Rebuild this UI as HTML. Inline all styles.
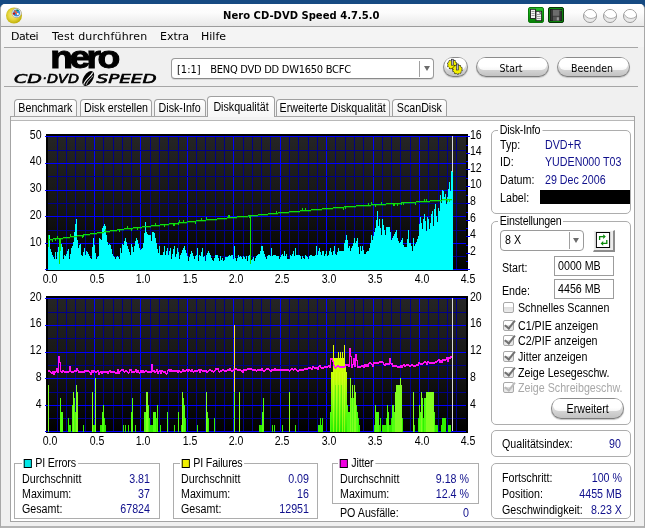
<!DOCTYPE html>
<html><head><meta charset="utf-8"><title>Nero CD-DVD Speed 4.7.5.0</title>
<style>
*{box-sizing:border-box;margin:0;padding:0}
html,body{width:645px;height:528px;overflow:hidden;background:#164a82}
body{position:relative;will-change:transform;font-family:"Liberation Sans",sans-serif;font-size:12px;line-height:14px;color:#000}
.abs,.t,.v,.ax{position:absolute;white-space:pre}
.t,.v,.gl,.fld span{transform:scaleX(0.89);transform-origin:0 0}
.t,.v{margin-top:-1px}
.v.r{transform-origin:100% 0}
.tab span{display:block;flex:none;transform:scaleX(0.89)}
.fld span{display:inline-block}
#win{position:absolute;left:0;top:4px;width:645px;height:524px;background:#f0f0f0;border:1px solid #a8a8a8;border-top:none;border-bottom:2px solid #b4b4b4;border-radius:5px 5px 0 0;overflow:hidden}
#title{position:absolute;left:0;top:0;width:643px;height:23px;background:linear-gradient(#ffffff 0,#fcfcfc 40%,#e9e9e9 100%);border-bottom:1px solid #9c9c9c}
#title .cap{position:absolute;left:222px;top:6px;white-space:pre;font:bold 10px "DejaVu Sans","Liberation Sans",sans-serif;letter-spacing:0.02px;color:#000}
#menu{position:absolute;left:0;top:23px;width:643px;height:20px;background:#f4f4f4}
.m{position:absolute;top:30px;font:11px "DejaVu Sans","Liberation Sans",sans-serif;letter-spacing:0;white-space:pre}
.hl{position:absolute;height:1px;background:#a6a6a6}
.wb{position:absolute;top:9px;width:14px;height:14px;border-radius:50%;border:1px solid #989898;background:linear-gradient(#ffffff 0,#ffffff 45%,#e2e2e2 46%,#ececec 100%);overflow:hidden}
.wb:after{content:"";position:absolute;left:-1px;top:-7px;width:14px;height:14px;border-radius:50%;background:#fff;border:1px solid #b0b0b0}
.btn{position:absolute;z-index:0;border:1px solid #8c8c8c;border-bottom-color:#7c7c7c;border-radius:10px;background:linear-gradient(#f4f4f4 0,#dcdcdc 50%,#c2c2c2 100%);box-shadow:0 1px 1px #c4c4c4;text-align:center;font:10.5px "DejaVu Sans Condensed","DejaVu Sans",sans-serif;letter-spacing:0;text-indent:-3px}
.btn:before{content:"";position:absolute;z-index:-1;left:1px;right:1px;top:0;height:12px;border-radius:9px 9px 8px 8px;background:linear-gradient(#fff,#fff 70%,#f6f6f6)}
.tab{white-space:nowrap;display:flex;justify-content:center;position:absolute;top:99px;height:17px;border:1px solid #a0a0a0;border-bottom:none;border-radius:4px 4px 0 0;background:linear-gradient(#ffffff,#f2f2f2);padding-top:1px;text-align:center}
.gb{position:absolute;border:1px solid #adadad;border-radius:5px}
.gl{position:absolute;background:#fff;padding:0 2px;white-space:pre;letter-spacing:-0.2px}
.v{color:#10108c}
.r{text-align:right}
.ax{font-size:12px;letter-spacing:0;transform:scaleX(0.88);transform-origin:0 0}
.ax.r{transform-origin:100% 0}
.ax.c{transform-origin:50% 0}
.fld{position:absolute;border:1px solid #9c9c9c;background:#fff;padding:2px 0 0 3px;white-space:pre}
.cb{position:absolute;left:503px;width:11px;height:11px;border:1px solid #a8a8a8;border-radius:2px;background:linear-gradient(#fff 0,#fff 45%,#dedede 50%,#ececec 100%)}
.cb.on:after{content:"";position:absolute;left:3.2px;top:-3.4px;width:3.6px;height:9px;border:solid #707070;border-width:0 2px 2px 0;transform:rotate(38deg)}
.cb.dis.on:after{border-color:#bbb}
</style></head><body>
<div id="win">
 <div id="title"><div class="cap">Nero CD-DVD Speed 4.7.5.0</div></div>
 <div id="menu"></div>
</div>
<!-- title icons -->
<svg class="abs" style="left:5px;top:6px" width="20" height="20" viewBox="0 0 20 20"><defs><radialGradient id="cd" cx="0.45" cy="0.45" r="0.6"><stop offset="0" stop-color="#f4e890"/><stop offset="0.5" stop-color="#e8d840"/><stop offset="1" stop-color="#b8a800"/></radialGradient></defs><circle cx="9" cy="9.5" r="8" fill="url(#cd)"/><circle cx="11.6" cy="7" r="4.6" fill="#fff" stroke="#a0a0a0" stroke-width="0.8"/><circle cx="11.6" cy="7" r="3.4" fill="#2a90e0"/><path d="M9.5 4.5 L13.5 9" stroke="#ff6030" stroke-width="1.6"/><circle cx="9" cy="7.6" r="1.2" fill="#c01010"/><circle cx="12.8" cy="8" r="1" fill="#fff"/><rect x="11.5" y="3.6" width="2" height="1.2" fill="#109020"/></svg>
<div class="abs" style="left:528px;top:7px;width:16px;height:16px;background:linear-gradient(#2cc02c,#0c9c0c 60%,#088008);border:1px solid #0a7a0a;border-radius:2px"></div>
<svg class="abs" style="left:524px;top:4px" width="46" height="24" viewBox="524 4 46 24"><rect x="530.5" y="9.3" width="5" height="9.2" fill="#f4f4f4" stroke="#222" stroke-width="0.9"/><path d="M531.5 11.5h3M531.5 13.5h3M531.5 15.5h3" stroke="#888" stroke-width="0.8"/><rect x="536" y="11.3" width="5.6" height="9.4" fill="#f4f4f4" stroke="#222" stroke-width="0.9"/><path d="M537 14.5h3.6M537 16.5h3.6M537 18.5h3.6" stroke="#888" stroke-width="0.8"/><path d="M539.8 11.3v2h1.8" stroke="#222" stroke-width="0.7" fill="#ccc"/></svg>
<div class="abs" style="left:548px;top:7px;width:16px;height:16px;background:#0b4a0b;border:1px solid #063806;box-shadow:inset 0 0 0 1px #0c8c0c;border-radius:2px"></div>
<svg class="abs" style="left:548px;top:7px" width="16" height="16" viewBox="548 7 16 16"><rect x="550.4" y="9.3" width="11.4" height="11.5" fill="#3a3a3a" stroke="#151515" stroke-width="0.6"/><rect x="552.6" y="9.8" width="7" height="6" fill="#6c6c6c"/><rect x="552.9" y="16.6" width="6.8" height="4.2" fill="#555"/><rect x="556.8" y="17.3" width="2.1" height="3" fill="#9a9a9a"/><rect x="560.4" y="9.9" width="1" height="1" fill="#20c020"/><path d="M552.3 9.5v11M560 11v9.5" stroke="#222" stroke-width="0.6"/></svg>
<div class="wb" style="left:583px"></div><div class="wb" style="left:603px"></div><div class="wb" style="left:623px"></div>
<!-- menu -->
<div class="m" style="left:11px;letter-spacing:-0.45px">Datei</div><div class="m" style="left:52px;letter-spacing:0.2px">Test durchführen</div><div class="m" style="left:160px">Extra</div><div class="m" style="left:201px">Hilfe</div>
<div class="hl" style="left:4px;top:47px;width:634px"></div>
<div class="hl" style="left:4px;top:86px;width:634px"></div>
<!-- logo -->
<svg class="abs" style="left:0;top:44px" width="170" height="44" viewBox="0 44 170 44">
<text x="50.3" y="68" font-family="Liberation Sans,sans-serif" font-weight="bold" font-size="31" textLength="66.3" lengthAdjust="spacingAndGlyphs" stroke="#000" stroke-width="1" letter-spacing="-3">nero</text>
<g font-family="DejaVu Sans,Liberation Sans,sans-serif" font-style="italic" font-size="11.4" fill="#000" stroke="#000" stroke-width="0.55">
<text x="14" y="83.4" textLength="28" lengthAdjust="spacingAndGlyphs">CD</text>
<text x="42.5" y="83.4" textLength="4" lengthAdjust="spacingAndGlyphs">·</text>
<text x="47" y="83.4" textLength="32" lengthAdjust="spacingAndGlyphs">DVD</text>
<text x="96.5" y="83.4" textLength="60" lengthAdjust="spacingAndGlyphs">SPEED</text>
</g>
<g transform="translate(88.2 78.5) rotate(32)"><ellipse cx="0" cy="0" rx="4.6" ry="8.4" fill="#000"/><path d="M-0.6 7.5 C-2.5 2 1.5 -3 0.6 -7.5" stroke="#fff" stroke-width="1.1" fill="none"/><path d="M1.6 6.5 C0.5 2 3 -2 2.4 -5" stroke="#fff" stroke-width="0.7" fill="none"/></g>
</svg>
<!-- drive combo -->
<div class="abs" style="left:171px;top:58px;width:263px;height:21px;border:1px solid #9a9a9a;border-bottom-color:#8a8a8a;border-radius:4px;background:#fff;box-shadow:0 1px 0 #d8d8d8"></div>
<div class="abs" id="cbt" style="left:177px;top:62.5px;font:11px 'DejaVu Sans Condensed','DejaVu Sans',sans-serif;letter-spacing:0">[1:1]<span style="display:inline-block;width:9.6px"></span><span style="letter-spacing:-0.26px">BENQ DVD DD DW1650 BCFC</span></div>
<div class="abs" style="left:419px;top:61px;width:1px;height:16px;background:#a0a0a0"></div>
<div class="abs" style="left:423.5px;top:66px;width:0;height:0;border:3.5px solid transparent;border-top:5px solid #6c6c6c"></div>
<!-- round icon btn -->
<div class="btn" style="left:443px;top:57px;width:25px;height:20px;border-radius:10px"></div>
<svg class="abs" style="left:438px;top:52px" width="36" height="30" viewBox="438 52 36 30"><g id="gr"><circle cx="452.2" cy="64.6" r="4.4" fill="#111" stroke="#111" stroke-width="1.6" stroke-dasharray="1.6 1.16"/><circle cx="452.2" cy="64.6" r="3.9" fill="#f4f000" stroke="#f4f000" stroke-width="1.3" stroke-dasharray="1.1 1.35" stroke-dashoffset="-0.2"/><rect x="451.3" y="59.2" width="2" height="6" fill="#b4b4cc" stroke="#222" stroke-width="0.6"/></g><g><circle cx="457.4" cy="69.4" r="4.4" fill="#111" stroke="#111" stroke-width="1.6" stroke-dasharray="1.6 1.16"/><circle cx="457.4" cy="69.4" r="3.9" fill="#f4f000" stroke="#f4f000" stroke-width="1.3" stroke-dasharray="1.1 1.35" stroke-dashoffset="-0.2"/><rect x="456.5" y="64" width="2" height="6" fill="#b4b4cc" stroke="#222" stroke-width="0.6"/></g></svg>
<div class="btn" style="left:476px;top:57px;width:73px;height:20px;padding-top:3.5px">Start</div>
<div class="btn" style="left:557px;top:57px;width:73px;height:20px;padding-top:3.5px">Beenden</div>
<!-- tabs -->
<div class="abs" style="left:10px;top:116px;width:625px;height:406px;background:#fff;border:1px solid #a4a4a4"></div>
<div class="abs" style="left:11px;top:117px;width:623px;height:3px;background:#f3f3f3"></div><div class="abs" style="left:11px;top:120px;width:623px;height:1px;background:#b8b8b8"></div>
<div class="tab" style="left:14px;width:63px"><span>Benchmark</span></div>
<div class="tab" style="left:80px;width:72px"><span>Disk erstellen</span></div>
<div class="tab" style="left:154px;width:52px"><span>Disk-Info</span></div>
<div class="tab" style="left:207px;width:68px;top:96px;height:21px;background:linear-gradient(#fff,#f6f6f6);z-index:2;padding-top:3px"><span>Diskqualität</span></div>
<div class="tab" style="left:276px;width:114px"><span>Erweiterte Diskqualität</span></div>
<div class="tab" style="left:392px;width:55px"><span>ScanDisk</span></div>
<svg width="645" height="528" viewBox="0 0 645 528" style="position:absolute;left:0;top:0" shape-rendering="crispEdges">
<defs><linearGradient id="bg" x1="0" y1="0" x2="0" y2="1"><stop offset="0" stop-color="#252525"/><stop offset="0.55" stop-color="#141414"/><stop offset="1" stop-color="#000"/></linearGradient></defs>
<path fill="#000" d="M46 134h422v137h-422z"/>
<rect x="48" y="136" width="418" height="134" fill="url(#bg)"/>
<path fill="#000088" d="M57 136h1v134h-1zM66 136h1v134h-1zM75 136h1v134h-1zM85 136h1v134h-1z"/>
<path fill="#0000ff" d="M94 136h1v134h-1z"/>
<path fill="#000088" d="M103 136h1v134h-1zM113 136h1v134h-1zM122 136h1v134h-1zM131 136h1v134h-1z"/>
<path fill="#0000ff" d="M140 136h1v134h-1z"/>
<path fill="#000088" d="M150 136h1v134h-1zM159 136h1v134h-1zM168 136h1v134h-1zM178 136h1v134h-1z"/>
<path fill="#0000ff" d="M187 136h1v134h-1z"/>
<path fill="#000088" d="M196 136h1v134h-1zM205 136h1v134h-1zM215 136h1v134h-1zM224 136h1v134h-1z"/>
<path fill="#0000ff" d="M233 136h1v134h-1z"/>
<path fill="#000088" d="M243 136h1v134h-1zM252 136h1v134h-1zM261 136h1v134h-1zM270 136h1v134h-1z"/>
<path fill="#0000ff" d="M280 136h1v134h-1z"/>
<path fill="#000088" d="M289 136h1v134h-1zM298 136h1v134h-1zM308 136h1v134h-1zM317 136h1v134h-1z"/>
<path fill="#0000ff" d="M326 136h1v134h-1z"/>
<path fill="#000088" d="M335 136h1v134h-1zM345 136h1v134h-1zM354 136h1v134h-1zM363 136h1v134h-1z"/>
<path fill="#0000ff" d="M373 136h1v134h-1z"/>
<path fill="#000088" d="M382 136h1v134h-1zM391 136h1v134h-1zM400 136h1v134h-1zM410 136h1v134h-1z"/>
<path fill="#0000ff" d="M419 136h1v134h-1z"/>
<path fill="#000088" d="M428 136h1v134h-1zM438 136h1v134h-1zM447 136h1v134h-1zM456 136h1v134h-1z"/>
<path fill="#0000ff" d="M45 136h425v1h-425z"/>
<path fill="#000088" d="M48 150h418v1h-418z"/>
<path fill="#0000ff" d="M45 163h421v1h-421z"/>
<path fill="#000088" d="M48 176h418v1h-418z"/>
<path fill="#0000ff" d="M45 190h421v1h-421z"/>
<path fill="#000088" d="M48 203h418v1h-418z"/>
<path fill="#0000ff" d="M45 216h421v1h-421z"/>
<path fill="#000088" d="M48 230h418v1h-418z"/>
<path fill="#0000ff" d="M45 243h421v1h-421z"/>
<path fill="#000088" d="M48 256h418v1h-418z"/>
<path fill="#0000ff" d="M45 269h425v1h-425zM466 136h4v1h-4zM466 145h2v1h-2zM466 153h4v1h-4zM466 161h2v1h-2zM466 169h4v1h-4zM466 178h2v1h-2zM466 186h4v1h-4zM466 195h2v1h-2zM466 203h4v1h-4zM466 212h2v1h-2zM466 220h4v1h-4zM466 228h2v1h-2zM466 236h4v1h-4zM466 245h2v1h-2zM466 253h4v1h-4zM466 261h2v1h-2zM466 269h4v1h-4z"/>
<path fill="#00ffff" d="M48 235h1v35h-1zM49 235h1v35h-1zM50 249h1v21h-1zM51 252h1v18h-1zM52 255h1v15h-1zM53 257h1v13h-1zM54 259h1v11h-1zM55 252h1v18h-1zM56 259h1v11h-1zM57 252h1v18h-1zM58 247h1v23h-1zM59 245h1v25h-1zM60 244h1v26h-1zM61 244h1v26h-1zM62 247h1v23h-1zM63 259h1v11h-1zM64 255h1v15h-1zM65 256h1v14h-1zM66 254h1v16h-1zM67 251h1v19h-1zM68 249h1v21h-1zM69 259h1v11h-1zM70 254h1v16h-1zM71 248h1v22h-1zM72 246h1v24h-1zM73 242h1v28h-1zM74 232h1v38h-1zM75 224h1v46h-1zM76 219h1v51h-1zM77 240h1v30h-1zM78 248h1v22h-1zM79 245h1v25h-1zM80 244h1v26h-1zM81 255h1v15h-1zM82 256h1v14h-1zM83 252h1v18h-1zM84 248h1v22h-1zM85 255h1v15h-1zM86 251h1v19h-1zM87 252h1v18h-1zM88 254h1v16h-1zM89 256h1v14h-1zM90 258h1v12h-1zM91 259h1v11h-1zM92 247h1v23h-1zM93 238h1v32h-1zM94 245h1v25h-1zM95 253h1v17h-1zM96 259h1v11h-1zM97 257h1v13h-1zM98 256h1v14h-1zM99 238h1v32h-1zM100 239h1v31h-1zM101 240h1v30h-1zM102 228h1v42h-1zM103 226h1v44h-1zM104 224h1v46h-1zM105 226h1v44h-1zM106 235h1v35h-1zM107 242h1v28h-1zM108 245h1v25h-1zM109 244h1v26h-1zM110 245h1v25h-1zM111 249h1v21h-1zM112 254h1v16h-1zM113 256h1v14h-1zM114 257h1v13h-1zM115 259h1v11h-1zM116 257h1v13h-1zM117 256h1v14h-1zM118 257h1v13h-1zM119 259h1v11h-1zM120 248h1v22h-1zM121 253h1v17h-1zM122 244h1v26h-1zM123 245h1v25h-1zM124 241h1v29h-1zM125 238h1v32h-1zM126 242h1v28h-1zM127 246h1v24h-1zM128 249h1v21h-1zM129 252h1v18h-1zM130 255h1v15h-1zM131 244h1v26h-1zM132 247h1v23h-1zM133 252h1v18h-1zM134 246h1v24h-1zM135 241h1v29h-1zM136 238h1v32h-1zM137 240h1v30h-1zM138 244h1v26h-1zM139 248h1v22h-1zM140 250h1v20h-1zM141 249h1v21h-1zM142 248h1v22h-1zM143 243h1v27h-1zM144 233h1v37h-1zM145 222h1v48h-1zM146 232h1v38h-1zM147 234h1v36h-1zM148 235h1v35h-1zM149 235h1v35h-1zM150 235h1v35h-1zM151 241h1v29h-1zM152 232h1v38h-1zM153 232h1v38h-1zM154 233h1v37h-1zM155 238h1v32h-1zM156 243h1v27h-1zM157 249h1v21h-1zM158 253h1v17h-1zM159 246h1v24h-1zM160 255h1v15h-1zM161 255h1v15h-1zM162 255h1v15h-1zM163 252h1v18h-1zM164 246h1v24h-1zM165 255h1v15h-1zM166 251h1v19h-1zM167 248h1v22h-1zM168 255h1v15h-1zM169 251h1v19h-1zM170 248h1v22h-1zM171 259h1v11h-1zM172 254h1v16h-1zM173 249h1v21h-1zM174 246h1v24h-1zM175 257h1v13h-1zM176 254h1v16h-1zM177 248h1v22h-1zM178 252h1v18h-1zM179 259h1v11h-1zM180 255h1v15h-1zM181 253h1v17h-1zM182 250h1v20h-1zM183 248h1v22h-1zM184 246h1v24h-1zM185 250h1v20h-1zM186 253h1v17h-1zM187 256h1v14h-1zM188 261h1v9h-1zM189 257h1v13h-1zM190 254h1v16h-1zM191 251h1v19h-1zM192 253h1v17h-1zM193 256h1v14h-1zM194 259h1v11h-1zM195 256h1v14h-1zM196 255h1v15h-1zM197 248h1v22h-1zM198 261h1v9h-1zM199 255h1v15h-1zM200 256h1v14h-1zM201 252h1v18h-1zM202 248h1v22h-1zM203 257h1v13h-1zM204 256h1v14h-1zM205 261h1v9h-1zM206 255h1v15h-1zM207 253h1v17h-1zM208 251h1v19h-1zM209 253h1v17h-1zM210 255h1v15h-1zM211 258h1v12h-1zM212 260h1v10h-1zM213 261h1v9h-1zM214 258h1v12h-1zM215 255h1v15h-1zM216 255h1v15h-1zM217 255h1v15h-1zM218 258h1v12h-1zM219 261h1v9h-1zM220 256h1v14h-1zM221 260h1v10h-1zM222 258h1v12h-1zM223 261h1v9h-1zM224 260h1v10h-1zM225 257h1v13h-1zM226 257h1v13h-1zM227 257h1v13h-1zM228 256h1v14h-1zM229 255h1v15h-1zM230 256h1v14h-1zM231 255h1v15h-1zM232 255h1v15h-1zM233 259h1v11h-1zM234 246h1v24h-1zM235 258h1v12h-1zM236 261h1v9h-1zM237 258h1v12h-1zM238 255h1v15h-1zM239 257h1v13h-1zM240 256h1v14h-1zM241 257h1v13h-1zM242 259h1v11h-1zM243 256h1v14h-1zM244 257h1v13h-1zM245 259h1v11h-1zM246 256h1v14h-1zM247 261h1v9h-1zM248 256h1v14h-1zM249 255h1v15h-1zM250 260h1v10h-1zM251 260h1v10h-1zM252 259h1v11h-1zM253 257h1v13h-1zM254 261h1v9h-1zM255 258h1v12h-1zM256 256h1v14h-1zM257 255h1v15h-1zM258 254h1v16h-1zM259 254h1v16h-1zM260 251h1v19h-1zM261 246h1v24h-1zM262 246h1v24h-1zM263 251h1v19h-1zM264 254h1v16h-1zM265 257h1v13h-1zM266 259h1v11h-1zM267 256h1v14h-1zM268 255h1v15h-1zM269 255h1v15h-1zM270 256h1v14h-1zM271 248h1v22h-1zM272 256h1v14h-1zM273 255h1v15h-1zM274 255h1v15h-1zM275 255h1v15h-1zM276 256h1v14h-1zM277 256h1v14h-1zM278 256h1v14h-1zM279 259h1v11h-1zM280 257h1v13h-1zM281 255h1v15h-1zM282 254h1v16h-1zM283 256h1v14h-1zM284 251h1v19h-1zM285 256h1v14h-1zM286 254h1v16h-1zM287 259h1v11h-1zM288 259h1v11h-1zM289 259h1v11h-1zM290 255h1v15h-1zM291 256h1v14h-1zM292 254h1v16h-1zM293 251h1v19h-1zM294 256h1v14h-1zM295 248h1v22h-1zM296 255h1v15h-1zM297 255h1v15h-1zM298 255h1v15h-1zM299 255h1v15h-1zM300 256h1v14h-1zM301 259h1v11h-1zM302 256h1v14h-1zM303 258h1v12h-1zM304 259h1v11h-1zM305 255h1v15h-1zM306 256h1v14h-1zM307 257h1v13h-1zM308 259h1v11h-1zM309 256h1v14h-1zM310 255h1v15h-1zM311 255h1v15h-1zM312 256h1v14h-1zM313 256h1v14h-1zM314 256h1v14h-1zM315 255h1v15h-1zM316 246h1v24h-1zM317 255h1v15h-1zM318 251h1v19h-1zM319 248h1v22h-1zM320 252h1v18h-1zM321 255h1v15h-1zM322 251h1v19h-1zM323 251h1v19h-1zM324 256h1v14h-1zM325 254h1v16h-1zM326 251h1v19h-1zM327 256h1v14h-1zM328 255h1v15h-1zM329 251h1v19h-1zM330 248h1v22h-1zM331 252h1v18h-1zM332 255h1v15h-1zM333 251h1v19h-1zM334 246h1v24h-1zM335 254h1v16h-1zM336 255h1v15h-1zM337 252h1v18h-1zM338 248h1v22h-1zM339 251h1v19h-1zM340 251h1v19h-1zM341 251h1v19h-1zM342 251h1v19h-1zM343 251h1v19h-1zM344 243h1v27h-1zM345 240h1v30h-1zM346 235h1v35h-1zM347 240h1v30h-1zM348 248h1v22h-1zM349 246h1v24h-1zM350 251h1v19h-1zM351 248h1v22h-1zM352 246h1v24h-1zM353 243h1v27h-1zM354 238h1v32h-1zM355 243h1v27h-1zM356 241h1v29h-1zM357 238h1v32h-1zM358 247h1v23h-1zM359 254h1v16h-1zM360 246h1v24h-1zM361 251h1v19h-1zM362 246h1v24h-1zM363 250h1v20h-1zM364 254h1v16h-1zM365 254h1v16h-1zM366 252h1v18h-1zM367 251h1v19h-1zM368 251h1v19h-1zM369 248h1v22h-1zM370 243h1v27h-1zM371 235h1v35h-1zM372 240h1v30h-1zM373 236h1v34h-1zM374 232h1v38h-1zM375 228h1v42h-1zM376 220h1v50h-1zM377 211h1v59h-1zM378 226h1v44h-1zM379 219h1v51h-1zM380 228h1v42h-1zM381 235h1v35h-1zM382 219h1v51h-1zM383 225h1v45h-1zM384 230h1v40h-1zM385 235h1v35h-1zM386 227h1v43h-1zM387 227h1v43h-1zM388 227h1v43h-1zM389 227h1v43h-1zM390 232h1v38h-1zM391 240h1v30h-1zM392 238h1v32h-1zM393 236h1v34h-1zM394 234h1v36h-1zM395 232h1v38h-1zM396 230h1v40h-1zM397 238h1v32h-1zM398 241h1v29h-1zM399 243h1v27h-1zM400 242h1v28h-1zM401 240h1v30h-1zM402 238h1v32h-1zM403 245h1v25h-1zM404 247h1v23h-1zM405 247h1v23h-1zM406 247h1v23h-1zM407 239h1v31h-1zM408 230h1v40h-1zM409 243h1v27h-1zM410 243h1v27h-1zM411 246h1v24h-1zM412 251h1v19h-1zM413 238h1v32h-1zM414 246h1v24h-1zM415 244h1v26h-1zM416 242h1v28h-1zM417 239h1v31h-1zM418 236h1v34h-1zM419 224h1v46h-1zM420 217h1v53h-1zM421 223h1v47h-1zM422 229h1v41h-1zM423 219h1v51h-1zM424 214h1v56h-1zM425 221h1v49h-1zM426 231h1v39h-1zM427 217h1v53h-1zM428 219h1v51h-1zM429 229h1v41h-1zM430 223h1v47h-1zM431 214h1v56h-1zM432 211h1v59h-1zM433 226h1v44h-1zM434 209h1v61h-1zM435 204h1v66h-1zM436 216h1v54h-1zM437 222h1v48h-1zM438 208h1v62h-1zM439 211h1v59h-1zM440 195h1v75h-1zM441 203h1v67h-1zM442 190h1v80h-1zM443 191h1v79h-1zM444 197h1v73h-1zM445 194h1v76h-1zM446 204h1v66h-1zM447 197h1v73h-1zM448 189h1v81h-1zM449 182h1v88h-1zM450 191h1v79h-1zM451 171h1v99h-1zM452 171h1v99h-1z"/>
<path fill="#d8d8d8" d="M452 136h1v36h-1z"/>
<path fill="#0ce00c" d="M48 235h1v12h-1zM49 239h1v1h-1zM50 239h1v1h-1zM51 239h1v1h-1zM52 239h1v3h-1zM53 238h1v1h-1zM54 238h1v1h-1zM55 238h1v3h-1zM56 238h1v1h-1zM57 236h1v3h-1zM58 238h1v1h-1zM59 238h1v3h-1zM60 238h1v3h-1zM61 238h1v1h-1zM62 238h1v1h-1zM63 237h1v1h-1zM64 237h1v1h-1zM65 237h1v1h-1zM66 237h1v1h-1zM67 237h1v1h-1zM68 237h1v1h-1zM69 237h1v1h-1zM70 234h1v3h-1zM71 236h1v1h-1zM72 236h1v1h-1zM73 236h1v1h-1zM74 236h1v1h-1zM75 236h1v1h-1zM76 236h1v1h-1zM77 235h1v1h-1zM78 235h1v1h-1zM79 235h1v1h-1zM80 235h1v1h-1zM81 235h1v1h-1zM82 235h1v3h-1zM83 234h1v3h-1zM84 234h1v1h-1zM85 234h1v1h-1zM86 234h1v1h-1zM87 234h1v1h-1zM88 234h1v1h-1zM89 234h1v1h-1zM90 233h1v1h-1zM91 233h1v1h-1zM92 233h1v1h-1zM93 233h1v1h-1zM94 233h1v1h-1zM95 233h1v1h-1zM96 233h1v1h-1zM97 232h1v1h-1zM98 232h1v1h-1zM99 232h1v1h-1zM100 232h1v1h-1zM101 232h1v1h-1zM102 232h1v1h-1zM103 232h1v1h-1zM104 231h1v1h-1zM105 229h1v3h-1zM106 231h1v1h-1zM107 231h1v1h-1zM108 231h1v1h-1zM109 231h1v1h-1zM110 230h1v1h-1zM111 230h1v1h-1zM112 230h1v1h-1zM113 230h1v1h-1zM114 230h1v1h-1zM115 230h1v1h-1zM116 230h1v1h-1zM117 229h1v1h-1zM118 229h1v1h-1zM119 229h1v3h-1zM120 229h1v1h-1zM121 229h1v1h-1zM122 229h1v1h-1zM123 229h1v1h-1zM124 228h1v1h-1zM125 228h1v1h-1zM126 228h1v1h-1zM127 226h1v3h-1zM128 228h1v1h-1zM129 228h1v1h-1zM130 228h1v1h-1zM131 228h1v3h-1zM132 228h1v1h-1zM133 227h1v1h-1zM134 227h1v1h-1zM135 227h1v1h-1zM136 227h1v1h-1zM137 227h1v3h-1zM138 227h1v1h-1zM139 227h1v1h-1zM140 227h1v1h-1zM141 227h1v1h-1zM142 226h1v1h-1zM143 226h1v1h-1zM144 226h1v1h-1zM145 226h1v1h-1zM146 226h1v1h-1zM147 226h1v1h-1zM148 226h1v1h-1zM149 226h1v1h-1zM150 226h1v1h-1zM151 225h1v1h-1zM152 225h1v1h-1zM153 225h1v1h-1zM154 225h1v1h-1zM155 223h1v3h-1zM156 225h1v1h-1zM157 225h1v1h-1zM158 225h1v1h-1zM159 225h1v1h-1zM160 224h1v1h-1zM161 224h1v1h-1zM162 224h1v1h-1zM163 224h1v1h-1zM164 224h1v3h-1zM165 224h1v1h-1zM166 224h1v1h-1zM167 224h1v1h-1zM168 224h1v1h-1zM169 223h1v1h-1zM170 223h1v1h-1zM171 223h1v1h-1zM172 223h1v1h-1zM173 223h1v3h-1zM174 223h1v3h-1zM175 223h1v1h-1zM176 223h1v1h-1zM177 223h1v1h-1zM178 222h1v3h-1zM179 220h1v3h-1zM180 222h1v1h-1zM181 222h1v1h-1zM182 222h1v1h-1zM183 220h1v3h-1zM184 222h1v1h-1zM185 222h1v1h-1zM186 222h1v1h-1zM187 221h1v1h-1zM188 221h1v1h-1zM189 221h1v1h-1zM190 221h1v1h-1zM191 221h1v1h-1zM192 221h1v1h-1zM193 221h1v1h-1zM194 221h1v1h-1zM195 221h1v3h-1zM196 220h1v1h-1zM197 220h1v1h-1zM198 220h1v1h-1zM199 220h1v1h-1zM200 220h1v1h-1zM201 218h1v3h-1zM202 220h1v1h-1zM203 220h1v1h-1zM204 220h1v1h-1zM205 220h1v1h-1zM206 217h1v3h-1zM207 219h1v1h-1zM208 219h1v1h-1zM209 219h1v1h-1zM210 219h1v1h-1zM211 219h1v1h-1zM212 219h1v1h-1zM213 219h1v1h-1zM214 219h1v1h-1zM215 219h1v1h-1zM216 219h1v1h-1zM217 218h1v1h-1zM218 218h1v1h-1zM219 218h1v1h-1zM220 218h1v1h-1zM221 218h1v1h-1zM222 218h1v1h-1zM223 218h1v1h-1zM224 218h1v1h-1zM225 218h1v1h-1zM226 218h1v1h-1zM227 217h1v1h-1zM228 215h1v3h-1zM229 215h1v3h-1zM230 217h1v1h-1zM231 217h1v1h-1zM232 217h1v1h-1zM233 217h1v1h-1zM234 217h1v1h-1zM235 217h1v1h-1zM236 217h1v1h-1zM237 216h1v1h-1zM238 216h1v1h-1zM239 216h1v1h-1zM240 216h1v1h-1zM241 216h1v1h-1zM242 216h1v1h-1zM243 216h1v1h-1zM244 216h1v1h-1zM245 216h1v1h-1zM246 216h1v1h-1zM247 216h1v1h-1zM248 215h1v1h-1zM249 215h1v3h-1zM250 215h1v1h-1zM251 215h1v1h-1zM252 215h1v1h-1zM253 215h1v1h-1zM254 215h1v1h-1zM255 215h1v1h-1zM256 215h1v1h-1zM257 215h1v1h-1zM258 214h1v1h-1zM259 214h1v1h-1zM260 214h1v1h-1zM261 214h1v1h-1zM262 214h1v1h-1zM263 214h1v1h-1zM264 214h1v1h-1zM265 214h1v1h-1zM266 214h1v1h-1zM267 214h1v1h-1zM268 213h1v1h-1zM269 213h1v1h-1zM270 213h1v1h-1zM271 213h1v1h-1zM272 213h1v1h-1zM273 213h1v1h-1zM274 213h1v1h-1zM275 213h1v1h-1zM276 211h1v3h-1zM277 213h1v1h-1zM278 212h1v1h-1zM279 212h1v1h-1zM280 212h1v1h-1zM281 212h1v1h-1zM282 212h1v1h-1zM283 212h1v1h-1zM284 212h1v1h-1zM285 212h1v1h-1zM286 212h1v1h-1zM287 212h1v1h-1zM288 212h1v1h-1zM289 211h1v1h-1zM290 211h1v1h-1zM291 211h1v1h-1zM292 211h1v1h-1zM293 211h1v1h-1zM294 211h1v1h-1zM295 211h1v1h-1zM296 211h1v1h-1zM297 211h1v1h-1zM298 211h1v1h-1zM299 211h1v1h-1zM300 210h1v1h-1zM301 210h1v1h-1zM302 208h1v3h-1zM303 210h1v1h-1zM304 210h1v1h-1zM305 208h1v3h-1zM306 210h1v1h-1zM307 210h1v1h-1zM308 210h1v1h-1zM309 210h1v1h-1zM310 210h1v1h-1zM311 209h1v1h-1zM312 209h1v1h-1zM313 209h1v1h-1zM314 209h1v1h-1zM315 209h1v1h-1zM316 209h1v1h-1zM317 209h1v1h-1zM318 209h1v1h-1zM319 209h1v1h-1zM320 209h1v1h-1zM321 209h1v1h-1zM322 208h1v1h-1zM323 208h1v1h-1zM324 208h1v1h-1zM325 208h1v1h-1zM326 208h1v1h-1zM327 208h1v1h-1zM328 208h1v1h-1zM329 208h1v1h-1zM330 208h1v1h-1zM331 208h1v1h-1zM332 208h1v1h-1zM333 207h1v1h-1zM334 207h1v1h-1zM335 207h1v1h-1zM336 207h1v1h-1zM337 207h1v1h-1zM338 207h1v1h-1zM339 207h1v1h-1zM340 207h1v1h-1zM341 207h1v1h-1zM342 207h1v1h-1zM343 207h1v3h-1zM344 206h1v1h-1zM345 206h1v3h-1zM346 206h1v1h-1zM347 206h1v1h-1zM348 206h1v1h-1zM349 206h1v1h-1zM350 206h1v1h-1zM351 206h1v1h-1zM352 206h1v1h-1zM353 206h1v1h-1zM354 206h1v1h-1zM355 206h1v1h-1zM356 205h1v1h-1zM357 205h1v1h-1zM358 205h1v1h-1zM359 205h1v1h-1zM360 205h1v1h-1zM361 205h1v1h-1zM362 205h1v1h-1zM363 205h1v1h-1zM364 205h1v1h-1zM365 205h1v1h-1zM366 205h1v1h-1zM367 205h1v1h-1zM368 203h1v3h-1zM369 205h1v1h-1zM370 205h1v1h-1zM371 202h1v3h-1zM372 204h1v1h-1zM373 204h1v1h-1zM374 204h1v1h-1zM375 204h1v3h-1zM376 204h1v1h-1zM377 204h1v1h-1zM378 204h1v1h-1zM379 204h1v1h-1zM380 204h1v1h-1zM381 202h1v3h-1zM382 204h1v1h-1zM383 204h1v1h-1zM384 204h1v1h-1zM385 204h1v1h-1zM386 203h1v1h-1zM387 203h1v1h-1zM388 203h1v1h-1zM389 203h1v1h-1zM390 203h1v1h-1zM391 203h1v1h-1zM392 203h1v1h-1zM393 203h1v3h-1zM394 203h1v3h-1zM395 203h1v1h-1zM396 203h1v1h-1zM397 203h1v3h-1zM398 203h1v1h-1zM399 203h1v1h-1zM400 203h1v1h-1zM401 202h1v3h-1zM402 202h1v1h-1zM403 202h1v3h-1zM404 202h1v1h-1zM405 202h1v1h-1zM406 202h1v1h-1zM407 202h1v1h-1zM408 202h1v1h-1zM409 202h1v1h-1zM410 202h1v1h-1zM411 202h1v1h-1zM412 202h1v1h-1zM413 202h1v1h-1zM414 202h1v1h-1zM415 202h1v3h-1zM416 201h1v1h-1zM417 201h1v1h-1zM418 201h1v1h-1zM419 201h1v1h-1zM420 201h1v1h-1zM421 201h1v1h-1zM422 201h1v1h-1zM423 201h1v1h-1zM424 199h1v3h-1zM425 201h1v1h-1zM426 199h1v3h-1zM427 201h1v1h-1zM428 201h1v1h-1zM429 201h1v1h-1zM430 200h1v1h-1zM431 200h1v1h-1zM432 200h1v1h-1zM433 200h1v1h-1zM434 200h1v1h-1zM435 200h1v1h-1zM436 200h1v1h-1zM437 200h1v1h-1zM438 200h1v1h-1zM439 200h1v1h-1zM440 200h1v1h-1zM441 200h1v1h-1zM442 199h1v1h-1zM443 199h1v1h-1zM444 199h1v1h-1zM445 199h1v1h-1zM446 199h1v1h-1zM447 199h1v3h-1zM448 199h1v1h-1zM449 199h1v3h-1zM450 199h1v1h-1zM451 199h1v1h-1z"/>
<path fill="#0ce00c" opacity="0.3" d="M49 240h1v1h-1zM50 240h1v1h-1zM51 240h1v1h-1zM52 240h1v1h-1zM53 239h1v1h-1zM54 239h1v1h-1zM55 239h1v1h-1zM56 239h1v1h-1zM57 239h1v1h-1zM58 239h1v1h-1zM59 239h1v1h-1zM60 239h1v1h-1zM61 239h1v1h-1zM62 239h1v1h-1zM63 238h1v1h-1zM64 238h1v1h-1zM65 238h1v1h-1zM66 238h1v1h-1zM67 238h1v1h-1zM68 238h1v1h-1zM69 238h1v1h-1zM70 237h1v1h-1zM71 237h1v1h-1zM72 237h1v1h-1zM73 237h1v1h-1zM74 237h1v1h-1zM75 237h1v1h-1zM76 237h1v1h-1zM77 236h1v1h-1zM78 236h1v1h-1zM79 236h1v1h-1zM80 236h1v1h-1zM81 236h1v1h-1zM82 236h1v1h-1zM83 235h1v1h-1zM84 235h1v1h-1zM85 235h1v1h-1zM86 235h1v1h-1zM87 235h1v1h-1zM88 235h1v1h-1zM89 235h1v1h-1zM90 234h1v1h-1zM91 234h1v1h-1zM92 234h1v1h-1zM93 234h1v1h-1zM94 234h1v1h-1zM95 234h1v1h-1zM96 234h1v1h-1zM97 233h1v1h-1zM98 233h1v1h-1zM99 233h1v1h-1zM100 233h1v1h-1zM101 233h1v1h-1zM102 233h1v1h-1zM103 233h1v1h-1zM104 232h1v1h-1zM105 232h1v1h-1zM106 232h1v1h-1zM107 232h1v1h-1zM108 232h1v1h-1zM109 232h1v1h-1zM110 231h1v1h-1zM111 231h1v1h-1zM112 231h1v1h-1zM113 231h1v1h-1zM114 231h1v1h-1zM115 231h1v1h-1zM116 231h1v1h-1zM117 230h1v1h-1zM118 230h1v1h-1zM119 230h1v1h-1zM120 230h1v1h-1zM121 230h1v1h-1zM122 230h1v1h-1zM123 230h1v1h-1zM124 229h1v1h-1zM125 229h1v1h-1zM126 229h1v1h-1zM127 229h1v1h-1zM128 229h1v1h-1zM129 229h1v1h-1zM130 229h1v1h-1zM131 229h1v1h-1zM132 229h1v1h-1zM133 228h1v1h-1zM134 228h1v1h-1zM135 228h1v1h-1zM136 228h1v1h-1zM137 228h1v1h-1zM138 228h1v1h-1zM139 228h1v1h-1zM140 228h1v1h-1zM141 228h1v1h-1zM142 227h1v1h-1zM143 227h1v1h-1zM144 227h1v1h-1zM145 227h1v1h-1zM146 227h1v1h-1zM147 227h1v1h-1zM148 227h1v1h-1zM149 227h1v1h-1zM150 227h1v1h-1zM151 226h1v1h-1zM152 226h1v1h-1zM153 226h1v1h-1zM154 226h1v1h-1zM155 226h1v1h-1zM156 226h1v1h-1zM157 226h1v1h-1zM158 226h1v1h-1zM159 226h1v1h-1zM160 225h1v1h-1zM161 225h1v1h-1zM162 225h1v1h-1zM163 225h1v1h-1zM164 225h1v1h-1zM165 225h1v1h-1zM166 225h1v1h-1zM167 225h1v1h-1zM168 225h1v1h-1zM169 224h1v1h-1zM170 224h1v1h-1zM171 224h1v1h-1zM172 224h1v1h-1zM173 224h1v1h-1zM174 224h1v1h-1zM175 224h1v1h-1zM176 224h1v1h-1zM177 224h1v1h-1zM178 223h1v1h-1zM179 223h1v1h-1zM180 223h1v1h-1zM181 223h1v1h-1zM182 223h1v1h-1zM183 223h1v1h-1zM184 223h1v1h-1zM185 223h1v1h-1zM186 223h1v1h-1zM187 222h1v1h-1zM188 222h1v1h-1zM189 222h1v1h-1zM190 222h1v1h-1zM191 222h1v1h-1zM192 222h1v1h-1zM193 222h1v1h-1zM194 222h1v1h-1zM195 222h1v1h-1zM196 221h1v1h-1zM197 221h1v1h-1zM198 221h1v1h-1zM199 221h1v1h-1zM200 221h1v1h-1zM201 221h1v1h-1zM202 221h1v1h-1zM203 221h1v1h-1zM204 221h1v1h-1zM205 221h1v1h-1zM206 220h1v1h-1zM207 220h1v1h-1zM208 220h1v1h-1zM209 220h1v1h-1zM210 220h1v1h-1zM211 220h1v1h-1zM212 220h1v1h-1zM213 220h1v1h-1zM214 220h1v1h-1zM215 220h1v1h-1zM216 220h1v1h-1zM217 219h1v1h-1zM218 219h1v1h-1zM219 219h1v1h-1zM220 219h1v1h-1zM221 219h1v1h-1zM222 219h1v1h-1zM223 219h1v1h-1zM224 219h1v1h-1zM225 219h1v1h-1zM226 219h1v1h-1zM227 218h1v1h-1zM228 218h1v1h-1zM229 218h1v1h-1zM230 218h1v1h-1zM231 218h1v1h-1zM232 218h1v1h-1zM233 218h1v1h-1zM234 218h1v1h-1zM235 218h1v1h-1zM236 218h1v1h-1zM237 217h1v1h-1zM238 217h1v1h-1zM239 217h1v1h-1zM240 217h1v1h-1zM241 217h1v1h-1zM242 217h1v1h-1zM243 217h1v1h-1zM244 217h1v1h-1zM245 217h1v1h-1zM246 217h1v1h-1zM247 217h1v1h-1zM248 216h1v1h-1zM249 216h1v1h-1zM250 216h1v1h-1zM251 216h1v1h-1zM252 216h1v1h-1zM253 216h1v1h-1zM254 216h1v1h-1zM255 216h1v1h-1zM256 216h1v1h-1zM257 216h1v1h-1zM258 215h1v1h-1zM259 215h1v1h-1zM260 215h1v1h-1zM261 215h1v1h-1zM262 215h1v1h-1zM263 215h1v1h-1zM264 215h1v1h-1zM265 215h1v1h-1zM266 215h1v1h-1zM267 215h1v1h-1zM268 214h1v1h-1zM269 214h1v1h-1zM270 214h1v1h-1zM271 214h1v1h-1zM272 214h1v1h-1zM273 214h1v1h-1zM274 214h1v1h-1zM275 214h1v1h-1zM276 214h1v1h-1zM277 214h1v1h-1zM278 213h1v1h-1zM279 213h1v1h-1zM280 213h1v1h-1zM281 213h1v1h-1zM282 213h1v1h-1zM283 213h1v1h-1zM284 213h1v1h-1zM285 213h1v1h-1zM286 213h1v1h-1zM287 213h1v1h-1zM288 213h1v1h-1zM289 212h1v1h-1zM290 212h1v1h-1zM291 212h1v1h-1zM292 212h1v1h-1zM293 212h1v1h-1zM294 212h1v1h-1zM295 212h1v1h-1zM296 212h1v1h-1zM297 212h1v1h-1zM298 212h1v1h-1zM299 212h1v1h-1zM300 211h1v1h-1zM301 211h1v1h-1zM302 211h1v1h-1zM303 211h1v1h-1zM304 211h1v1h-1zM305 211h1v1h-1zM306 211h1v1h-1zM307 211h1v1h-1zM308 211h1v1h-1zM309 211h1v1h-1zM310 211h1v1h-1zM311 210h1v1h-1zM312 210h1v1h-1zM313 210h1v1h-1zM314 210h1v1h-1zM315 210h1v1h-1zM316 210h1v1h-1zM317 210h1v1h-1zM318 210h1v1h-1zM319 210h1v1h-1zM320 210h1v1h-1zM321 210h1v1h-1zM322 209h1v1h-1zM323 209h1v1h-1zM324 209h1v1h-1zM325 209h1v1h-1zM326 209h1v1h-1zM327 209h1v1h-1zM328 209h1v1h-1zM329 209h1v1h-1zM330 209h1v1h-1zM331 209h1v1h-1zM332 209h1v1h-1zM333 208h1v1h-1zM334 208h1v1h-1zM335 208h1v1h-1zM336 208h1v1h-1zM337 208h1v1h-1zM338 208h1v1h-1zM339 208h1v1h-1zM340 208h1v1h-1zM341 208h1v1h-1zM342 208h1v1h-1zM343 208h1v1h-1zM344 207h1v1h-1zM345 207h1v1h-1zM346 207h1v1h-1zM347 207h1v1h-1zM348 207h1v1h-1zM349 207h1v1h-1zM350 207h1v1h-1zM351 207h1v1h-1zM352 207h1v1h-1zM353 207h1v1h-1zM354 207h1v1h-1zM355 207h1v1h-1zM356 206h1v1h-1zM357 206h1v1h-1zM358 206h1v1h-1zM359 206h1v1h-1zM360 206h1v1h-1zM361 206h1v1h-1zM362 206h1v1h-1zM363 206h1v1h-1zM364 206h1v1h-1zM365 206h1v1h-1zM366 206h1v1h-1zM367 206h1v1h-1zM368 206h1v1h-1zM369 206h1v1h-1zM370 206h1v1h-1zM371 205h1v1h-1zM372 205h1v1h-1zM373 205h1v1h-1zM374 205h1v1h-1zM375 205h1v1h-1zM376 205h1v1h-1zM377 205h1v1h-1zM378 205h1v1h-1zM379 205h1v1h-1zM380 205h1v1h-1zM381 205h1v1h-1zM382 205h1v1h-1zM383 205h1v1h-1zM384 205h1v1h-1zM385 205h1v1h-1zM386 204h1v1h-1zM387 204h1v1h-1zM388 204h1v1h-1zM389 204h1v1h-1zM390 204h1v1h-1zM391 204h1v1h-1zM392 204h1v1h-1zM393 204h1v1h-1zM394 204h1v1h-1zM395 204h1v1h-1zM396 204h1v1h-1zM397 204h1v1h-1zM398 204h1v1h-1zM399 204h1v1h-1zM400 204h1v1h-1zM401 203h1v1h-1zM402 203h1v1h-1zM403 203h1v1h-1zM404 203h1v1h-1zM405 203h1v1h-1zM406 203h1v1h-1zM407 203h1v1h-1zM408 203h1v1h-1zM409 203h1v1h-1zM410 203h1v1h-1zM411 203h1v1h-1zM412 203h1v1h-1zM413 203h1v1h-1zM414 203h1v1h-1zM415 203h1v1h-1zM416 202h1v1h-1zM417 202h1v1h-1zM418 202h1v1h-1zM419 202h1v1h-1zM420 202h1v1h-1zM421 202h1v1h-1zM422 202h1v1h-1zM423 202h1v1h-1zM424 202h1v1h-1zM425 202h1v1h-1zM426 202h1v1h-1zM427 202h1v1h-1zM428 202h1v1h-1zM429 202h1v1h-1zM430 201h1v1h-1zM431 201h1v1h-1zM432 201h1v1h-1zM433 201h1v1h-1zM434 201h1v1h-1zM435 201h1v1h-1zM436 201h1v1h-1zM437 201h1v1h-1zM438 201h1v1h-1zM439 201h1v1h-1zM440 201h1v1h-1zM441 201h1v1h-1zM442 200h1v1h-1zM443 200h1v1h-1zM444 200h1v1h-1zM445 200h1v1h-1zM446 200h1v1h-1zM447 200h1v1h-1zM448 200h1v1h-1zM449 200h1v1h-1zM450 200h1v1h-1zM451 200h1v1h-1z"/>
<path fill="#0ce00c" d="M59 238h1v26h-1zM60 239h1v12h-1zM250 216h1v48h-1z"/>
<path fill="#000" d="M46 296h422v137h-422z"/>
<rect x="48" y="298" width="418" height="134" fill="url(#bg)"/>
<path fill="#000088" d="M57 298h1v134h-1zM66 298h1v134h-1zM75 298h1v134h-1zM85 298h1v134h-1z"/>
<path fill="#0000ff" d="M94 298h1v134h-1z"/>
<path fill="#000088" d="M103 298h1v134h-1zM113 298h1v134h-1zM122 298h1v134h-1zM131 298h1v134h-1z"/>
<path fill="#0000ff" d="M140 298h1v134h-1z"/>
<path fill="#000088" d="M150 298h1v134h-1zM159 298h1v134h-1zM168 298h1v134h-1zM178 298h1v134h-1z"/>
<path fill="#0000ff" d="M187 298h1v134h-1z"/>
<path fill="#000088" d="M196 298h1v134h-1zM205 298h1v134h-1zM215 298h1v134h-1zM224 298h1v134h-1z"/>
<path fill="#0000ff" d="M233 298h1v134h-1z"/>
<path fill="#000088" d="M243 298h1v134h-1zM252 298h1v134h-1zM261 298h1v134h-1zM270 298h1v134h-1z"/>
<path fill="#0000ff" d="M280 298h1v134h-1z"/>
<path fill="#000088" d="M289 298h1v134h-1zM298 298h1v134h-1zM308 298h1v134h-1zM317 298h1v134h-1z"/>
<path fill="#0000ff" d="M326 298h1v134h-1z"/>
<path fill="#000088" d="M335 298h1v134h-1zM345 298h1v134h-1zM354 298h1v134h-1zM363 298h1v134h-1z"/>
<path fill="#0000ff" d="M373 298h1v134h-1z"/>
<path fill="#000088" d="M382 298h1v134h-1zM391 298h1v134h-1zM400 298h1v134h-1zM410 298h1v134h-1z"/>
<path fill="#0000ff" d="M419 298h1v134h-1z"/>
<path fill="#000088" d="M428 298h1v134h-1zM438 298h1v134h-1zM447 298h1v134h-1zM456 298h1v134h-1z"/>
<path fill="#0000ff" d="M45 298h421v1h-421z"/>
<path fill="#000088" d="M48 312h418v1h-418z"/>
<path fill="#0000ff" d="M45 325h421v1h-421z"/>
<path fill="#000088" d="M48 338h418v1h-418z"/>
<path fill="#0000ff" d="M45 352h421v1h-421z"/>
<path fill="#000088" d="M48 365h418v1h-418z"/>
<path fill="#0000ff" d="M45 378h421v1h-421z"/>
<path fill="#000088" d="M48 392h418v1h-418z"/>
<path fill="#0000ff" d="M45 405h421v1h-421z"/>
<path fill="#000088" d="M48 418h418v1h-418z"/>
<path fill="#0000ff" d="M45 431h421v1h-421z"/>
<path fill="#80ff20" d="M48 385h1v47h-1z"/>
<path fill="#50ff10" d="M60 398h1v34h-1zM61 412h2v20h-2z"/>
<path fill="#30f000" d="M68 418h1v14h-1zM69 425h2v7h-2z"/>
<path fill="#50ff10" d="M72 405h1v27h-1z"/>
<path fill="#80ff20" d="M73 392h1v40h-1z"/>
<path fill="#50ff10" d="M74 398h1v34h-1zM75 412h1v20h-1z"/>
<path fill="#80ff20" d="M76 385h1v47h-1zM77 392h1v40h-1z"/>
<path fill="#30f000" d="M83 425h1v7h-1z"/>
<path fill="#80ff20" d="M92 392h1v40h-1z"/>
<path fill="#30f000" d="M93 425h2v7h-2z"/>
<path fill="#80ff20" d="M95 378h1v54h-1z"/>
<path fill="#30f000" d="M100 425h2v7h-2z"/>
<path fill="#50ff10" d="M102 412h1v20h-1zM103 405h1v27h-1z"/>
<path fill="#30f000" d="M104 418h1v14h-1zM105 425h1v7h-1zM123 425h1v7h-1zM125 425h1v7h-1zM128 425h1v7h-1z"/>
<path fill="#50ff10" d="M131 412h1v20h-1zM132 398h1v34h-1z"/>
<path fill="#30f000" d="M135 425h1v7h-1z"/>
<path fill="#50ff10" d="M144 412h2v20h-2z"/>
<path fill="#80ff20" d="M146 392h2v40h-2z"/>
<path fill="#50ff10" d="M148 405h1v27h-1z"/>
<path fill="#30f000" d="M149 418h1v14h-1zM150 425h3v7h-3z"/>
<path fill="#50ff10" d="M153 412h3v20h-3z"/>
<path fill="#30f000" d="M156 418h1v14h-1z"/>
<path fill="#50ff10" d="M157 405h1v27h-1z"/>
<path fill="#30f000" d="M160 425h1v7h-1z"/>
<path fill="#50ff10" d="M167 412h1v20h-1z"/>
<path fill="#30f000" d="M174 425h1v7h-1z"/>
<path fill="#50ff10" d="M178 412h1v20h-1z"/>
<path fill="#30f000" d="M181 425h1v7h-1z"/>
<path fill="#80ff20" d="M182 392h1v40h-1z"/>
<path fill="#50ff10" d="M183 398h1v34h-1zM184 405h1v27h-1z"/>
<path fill="#30f000" d="M185 418h1v14h-1zM197 425h1v7h-1z"/>
<path fill="#80ff20" d="M206 392h1v40h-1z"/>
<path fill="#50ff10" d="M207 412h1v20h-1z"/>
<path fill="#30f000" d="M208 418h1v14h-1zM214 418h1v14h-1z"/>
<path fill="#ffe030" d="M234 325h1v107h-1z"/>
<path fill="#80ff20" d="M239 392h1v40h-1z"/>
<path fill="#30f000" d="M259 425h3v7h-3z"/>
<path fill="#50ff10" d="M262 412h1v20h-1zM263 398h1v34h-1z"/>
<path fill="#30f000" d="M272 425h1v7h-1zM274 425h1v7h-1zM282 425h1v7h-1z"/>
<path fill="#80ff20" d="M289 392h1v40h-1z"/>
<path fill="#30f000" d="M295 425h1v7h-1zM318 425h1v7h-1zM319 425h1v7h-1zM320 418h1v14h-1zM321 425h1v7h-1zM322 418h1v14h-1z"/>
<path fill="#50ff10" d="M330 412h1v20h-1z"/>
<path fill="#c8ff10" d="M331 372h2v60h-2zM333 345h1v87h-1zM334 358h4v74h-4zM338 352h1v80h-1zM339 358h1v74h-1zM340 352h1v80h-1zM341 358h1v74h-1zM342 352h1v80h-1zM343 358h1v74h-1zM344 345h1v87h-1zM345 365h1v67h-1zM346 372h1v60h-1z"/>
<path fill="#50ff10" d="M347 405h1v27h-1zM348 412h2v20h-2z"/>
<path fill="#80ff20" d="M350 378h1v54h-1z"/>
<path fill="#50ff10" d="M351 398h1v34h-1z"/>
<path fill="#80ff20" d="M352 385h1v47h-1z"/>
<path fill="#50ff10" d="M353 398h1v34h-1z"/>
<path fill="#80ff20" d="M354 385h1v47h-1zM355 392h1v40h-1z"/>
<path fill="#50ff10" d="M356 405h1v27h-1zM357 412h1v20h-1z"/>
<path fill="#30f000" d="M358 418h1v14h-1zM359 425h1v7h-1zM374 425h1v7h-1z"/>
<path fill="#50ff10" d="M375 405h1v27h-1zM376 412h3v20h-3z"/>
<path fill="#30f000" d="M379 425h1v7h-1zM380 418h1v14h-1zM382 425h4v7h-4zM386 418h1v14h-1z"/>
<path fill="#50ff10" d="M387 405h1v27h-1zM388 412h1v20h-1z"/>
<path fill="#30f000" d="M389 425h2v7h-2zM391 418h1v14h-1z"/>
<path fill="#50ff10" d="M392 405h2v27h-2zM394 412h1v20h-1z"/>
<path fill="#80ff20" d="M395 392h1v40h-1zM396 385h4v47h-4zM400 378h1v54h-1zM401 385h1v47h-1z"/>
<path fill="#30f000" d="M402 418h1v14h-1z"/>
<path fill="#80ff20" d="M413 392h1v40h-1z"/>
<path fill="#30f000" d="M414 425h1v7h-1zM418 418h1v14h-1z"/>
<path fill="#50ff10" d="M419 405h1v27h-1zM420 412h1v20h-1z"/>
<path fill="#80ff20" d="M421 392h1v40h-1z"/>
<path fill="#50ff10" d="M422 398h1v34h-1z"/>
<path fill="#30f000" d="M423 418h1v14h-1z"/>
<path fill="#50ff10" d="M424 398h2v34h-2z"/>
<path fill="#80ff20" d="M426 392h8v40h-8z"/>
<path fill="#50ff10" d="M434 412h1v20h-1z"/>
<path fill="#30f000" d="M435 425h3v7h-3zM441 425h1v7h-1zM442 418h4v14h-4zM448 425h3v7h-3z"/>
<defs><linearGradient id="cl" gradientUnits="userSpaceOnUse" x1="0" y1="345.2" x2="0" y2="432"><stop offset="0" stop-color="#e4ff00"/><stop offset="0.38" stop-color="#c4ff08"/><stop offset="0.62" stop-color="#84ff10"/><stop offset="1" stop-color="#28f000"/></linearGradient></defs>
<rect x="331" y="372" width="2" height="60" fill="url(#cl)"/>
<rect x="333" y="345" width="1" height="87" fill="url(#cl)"/>
<rect x="334" y="358" width="4" height="74" fill="url(#cl)"/>
<rect x="338" y="352" width="1" height="80" fill="url(#cl)"/>
<rect x="339" y="358" width="1" height="74" fill="url(#cl)"/>
<rect x="340" y="352" width="1" height="80" fill="url(#cl)"/>
<rect x="341" y="358" width="1" height="74" fill="url(#cl)"/>
<rect x="342" y="352" width="1" height="80" fill="url(#cl)"/>
<rect x="343" y="358" width="1" height="74" fill="url(#cl)"/>
<rect x="344" y="345" width="1" height="87" fill="url(#cl)"/>
<rect x="345" y="365" width="1" height="67" fill="url(#cl)"/>
<rect x="346" y="372" width="1" height="60" fill="url(#cl)"/>
<rect x="333" y="371.7" width="1" height="59.8" fill="#d8ff20" opacity="0.55"/>
<rect x="336" y="371.7" width="1" height="59.8" fill="#d8ff20" opacity="0.55"/>
<rect x="339" y="371.7" width="1" height="59.8" fill="#d8ff20" opacity="0.55"/>
<rect x="342" y="371.7" width="1" height="59.8" fill="#d8ff20" opacity="0.55"/>
<rect x="344" y="371.7" width="1" height="59.8" fill="#d8ff20" opacity="0.55"/>
<rect x="335" y="385.0" width="1" height="46.5" fill="#20e000" opacity="0.45"/>
<rect x="338" y="385.0" width="1" height="46.5" fill="#20e000" opacity="0.45"/>
<rect x="341" y="385.0" width="1" height="46.5" fill="#20e000" opacity="0.45"/>
<path fill="#60ff10" d="M234 391.7h1v39.8h-1z"/>
<path fill="#d8d8d8" d="M452 298h1v133h-1z"/>
<path fill="#ff10f4" d="M48 370h1v2h-1zM49 370h1v2h-1zM50 371h1v2h-1zM51 372h1v2h-1zM52 371h1v3h-1zM53 371h1v4h-1zM54 371h1v4h-1zM55 371h1v2h-1zM56 368h1v4h-1zM57 368h1v5h-1zM58 356h1v17h-1zM59 356h1v7h-1zM60 362h1v10h-1zM61 371h1v2h-1zM62 370h1v3h-1zM63 370h1v2h-1zM64 371h1v2h-1zM65 371h1v2h-1zM66 371h1v2h-1zM67 371h1v2h-1zM68 371h1v2h-1zM69 366h1v6h-1zM70 366h1v6h-1zM71 371h1v2h-1zM72 371h1v2h-1zM73 371h1v2h-1zM74 370h1v2h-1zM75 370h1v2h-1zM76 368h1v4h-1zM77 368h1v3h-1zM78 370h1v3h-1zM79 371h1v2h-1zM80 371h1v2h-1zM81 371h1v2h-1zM82 371h1v2h-1zM83 371h1v2h-1zM84 370h1v3h-1zM85 370h1v2h-1zM86 370h1v2h-1zM87 370h1v2h-1zM88 370h1v2h-1zM89 371h1v2h-1zM90 372h1v3h-1zM91 370h1v5h-1zM92 370h1v3h-1zM93 370h1v3h-1zM94 370h1v2h-1zM95 371h1v2h-1zM96 371h1v2h-1zM97 370h1v2h-1zM98 370h1v5h-1zM99 372h1v3h-1zM100 371h1v2h-1zM101 371h1v3h-1zM102 371h1v3h-1zM103 371h1v2h-1zM104 371h1v2h-1zM105 371h1v2h-1zM106 371h1v2h-1zM107 371h1v3h-1zM108 371h1v3h-1zM109 370h1v2h-1zM110 370h1v3h-1zM111 371h1v2h-1zM112 371h1v2h-1zM113 371h1v2h-1zM114 371h1v2h-1zM115 372h1v2h-1zM116 372h1v2h-1zM117 369h1v5h-1zM118 369h1v5h-1zM119 371h1v3h-1zM120 370h1v2h-1zM121 369h1v2h-1zM122 369h1v2h-1zM123 369h1v3h-1zM124 371h1v2h-1zM125 370h1v2h-1zM126 370h1v2h-1zM127 371h1v2h-1zM128 372h1v2h-1zM129 369h1v4h-1zM130 369h1v2h-1zM131 369h1v4h-1zM132 371h1v2h-1zM133 371h1v2h-1zM134 371h1v2h-1zM135 369h1v3h-1zM136 369h1v4h-1zM137 370h1v3h-1zM138 370h1v3h-1zM139 372h1v2h-1zM140 370h1v3h-1zM141 370h1v3h-1zM142 370h1v3h-1zM143 370h1v3h-1zM144 371h1v2h-1zM145 370h1v2h-1zM146 370h1v2h-1zM147 371h1v2h-1zM148 371h1v2h-1zM149 371h1v2h-1zM150 371h1v2h-1zM151 364h1v9h-1zM152 364h1v8h-1zM153 370h1v2h-1zM154 370h1v3h-1zM155 371h1v2h-1zM156 369h1v3h-1zM157 369h1v5h-1zM158 371h1v3h-1zM159 370h1v2h-1zM160 370h1v4h-1zM161 370h1v4h-1zM162 370h1v2h-1zM163 371h1v2h-1zM164 371h1v2h-1zM165 371h1v3h-1zM166 373h1v2h-1zM167 370h1v4h-1zM168 369h1v2h-1zM169 369h1v3h-1zM170 369h1v3h-1zM171 369h1v3h-1zM172 370h1v2h-1zM173 370h1v2h-1zM174 370h1v2h-1zM175 370h1v2h-1zM176 370h1v2h-1zM177 370h1v3h-1zM178 370h1v3h-1zM179 370h1v2h-1zM180 371h1v2h-1zM181 371h1v2h-1zM182 369h1v3h-1zM183 369h1v3h-1zM184 370h1v2h-1zM185 370h1v2h-1zM186 369h1v2h-1zM187 369h1v3h-1zM188 369h1v3h-1zM189 369h1v2h-1zM190 370h1v2h-1zM191 369h1v3h-1zM192 369h1v3h-1zM193 371h1v2h-1zM194 370h1v2h-1zM195 370h1v2h-1zM196 370h1v2h-1zM197 370h1v2h-1zM198 369h1v2h-1zM199 369h1v4h-1zM200 369h1v4h-1zM201 369h1v2h-1zM202 370h1v2h-1zM203 370h1v2h-1zM204 370h1v2h-1zM205 370h1v2h-1zM206 370h1v3h-1zM207 371h1v2h-1zM208 370h1v2h-1zM209 369h1v2h-1zM210 369h1v2h-1zM211 370h1v2h-1zM212 370h1v2h-1zM213 371h1v2h-1zM214 370h1v2h-1zM215 368h1v3h-1zM216 368h1v2h-1zM217 368h1v2h-1zM218 368h1v4h-1zM219 371h1v2h-1zM220 370h1v2h-1zM221 370h1v2h-1zM222 369h1v2h-1zM223 369h1v2h-1zM224 370h1v2h-1zM225 370h1v2h-1zM226 370h1v2h-1zM227 369h1v2h-1zM228 369h1v2h-1zM229 368h1v3h-1zM230 368h1v3h-1zM231 370h1v2h-1zM232 370h1v2h-1zM233 369h1v2h-1zM234 369h1v2h-1zM235 368h1v2h-1zM236 368h1v2h-1zM237 369h1v2h-1zM238 369h1v2h-1zM239 369h1v2h-1zM240 369h1v2h-1zM241 370h1v2h-1zM242 370h1v3h-1zM243 369h1v4h-1zM244 369h1v2h-1zM245 369h1v2h-1zM246 369h1v2h-1zM247 368h1v2h-1zM248 368h1v2h-1zM249 368h1v2h-1zM250 368h1v2h-1zM251 368h1v2h-1zM252 369h1v2h-1zM253 369h1v2h-1zM254 369h1v2h-1zM255 369h1v2h-1zM256 370h1v2h-1zM257 369h1v2h-1zM258 369h1v2h-1zM259 369h1v2h-1zM260 369h1v2h-1zM261 368h1v3h-1zM262 368h1v3h-1zM263 370h1v2h-1zM264 370h1v2h-1zM265 369h1v2h-1zM266 368h1v2h-1zM267 368h1v2h-1zM268 368h1v2h-1zM269 369h1v2h-1zM270 370h1v2h-1zM271 369h1v3h-1zM272 369h1v2h-1zM273 369h1v2h-1zM274 368h1v3h-1zM275 368h1v3h-1zM276 369h1v2h-1zM277 369h1v2h-1zM278 369h1v2h-1zM279 369h1v2h-1zM280 369h1v2h-1zM281 369h1v2h-1zM282 369h1v2h-1zM283 369h1v2h-1zM284 369h1v2h-1zM285 369h1v2h-1zM286 369h1v2h-1zM287 369h1v2h-1zM288 369h1v2h-1zM289 370h1v2h-1zM290 369h1v2h-1zM291 368h1v2h-1zM292 368h1v2h-1zM293 369h1v2h-1zM294 368h1v2h-1zM295 368h1v2h-1zM296 369h1v2h-1zM297 370h1v2h-1zM298 370h1v2h-1zM299 369h1v2h-1zM300 369h1v2h-1zM301 369h1v2h-1zM302 369h1v2h-1zM303 369h1v2h-1zM304 368h1v2h-1zM305 368h1v2h-1zM306 368h1v2h-1zM307 368h1v2h-1zM308 367h1v2h-1zM309 367h1v2h-1zM310 367h1v2h-1zM311 368h1v2h-1zM312 366h1v4h-1zM313 366h1v2h-1zM314 367h1v2h-1zM315 367h1v2h-1zM316 367h1v2h-1zM317 367h1v3h-1zM318 366h1v4h-1zM319 365h1v2h-1zM320 365h1v3h-1zM321 367h1v2h-1zM322 367h1v2h-1zM323 367h1v2h-1zM324 366h1v2h-1zM325 366h1v2h-1zM326 366h1v2h-1zM327 366h1v2h-1zM328 365h1v2h-1zM329 365h1v3h-1zM330 358h1v10h-1zM331 358h1v2h-1zM332 358h1v4h-1zM333 361h1v5h-1zM334 365h1v3h-1zM335 367h1v2h-1zM336 366h1v2h-1zM337 365h1v2h-1zM338 365h1v2h-1zM339 366h1v2h-1zM340 366h1v2h-1zM341 366h1v2h-1zM342 366h1v2h-1zM343 366h1v2h-1zM344 366h1v2h-1zM345 364h1v3h-1zM346 364h1v2h-1zM347 364h1v2h-1zM348 364h1v3h-1zM349 348h1v19h-1zM350 348h1v9h-1zM351 356h1v12h-1zM352 364h1v4h-1zM353 358h1v7h-1zM354 358h1v9h-1zM355 354h1v13h-1zM356 354h1v7h-1zM357 360h1v8h-1zM358 366h1v2h-1zM359 366h1v2h-1zM360 366h1v2h-1zM361 365h1v2h-1zM362 365h1v2h-1zM363 365h1v3h-1zM364 364h1v4h-1zM365 364h1v3h-1zM366 364h1v3h-1zM367 364h1v3h-1zM368 363h1v4h-1zM369 362h1v2h-1zM370 362h1v2h-1zM371 363h1v2h-1zM372 364h1v3h-1zM373 362h1v5h-1zM374 362h1v2h-1zM375 362h1v2h-1zM376 362h1v2h-1zM377 362h1v2h-1zM378 362h1v2h-1zM379 361h1v2h-1zM380 361h1v2h-1zM381 361h1v2h-1zM382 361h1v2h-1zM383 362h1v3h-1zM384 364h1v2h-1zM385 363h1v3h-1zM386 363h1v2h-1zM387 363h1v2h-1zM388 363h1v2h-1zM389 358h1v7h-1zM390 358h1v6h-1zM391 363h1v2h-1zM392 363h1v4h-1zM393 365h1v2h-1zM394 365h1v2h-1zM395 365h1v2h-1zM396 365h1v2h-1zM397 366h1v2h-1zM398 366h1v2h-1zM399 366h1v2h-1zM400 365h1v3h-1zM401 365h1v3h-1zM402 365h1v3h-1zM403 364h1v2h-1zM404 364h1v3h-1zM405 365h1v2h-1zM406 364h1v2h-1zM407 364h1v2h-1zM408 364h1v2h-1zM409 365h1v2h-1zM410 365h1v2h-1zM411 364h1v2h-1zM412 364h1v2h-1zM413 365h1v2h-1zM414 365h1v2h-1zM415 365h1v2h-1zM416 364h1v2h-1zM417 364h1v2h-1zM418 362h1v4h-1zM419 362h1v2h-1zM420 363h1v2h-1zM421 363h1v2h-1zM422 363h1v2h-1zM423 362h1v2h-1zM424 361h1v2h-1zM425 361h1v2h-1zM426 362h1v3h-1zM427 361h1v4h-1zM428 361h1v2h-1zM429 362h1v2h-1zM430 362h1v2h-1zM431 362h1v2h-1zM432 362h1v2h-1zM433 362h1v2h-1zM434 362h1v2h-1zM435 361h1v2h-1zM436 361h1v2h-1zM437 360h1v2h-1zM438 359h1v2h-1zM439 359h1v4h-1zM440 360h1v3h-1zM441 360h1v3h-1zM442 359h1v4h-1zM443 359h1v2h-1zM444 359h1v2h-1zM445 359h1v2h-1zM446 357h1v3h-1zM447 357h1v5h-1zM448 357h1v5h-1zM449 357h1v2h-1zM450 356h1v3h-1zM451 356h1v2h-1z"/>
</svg>
<div class="ax r" style="left:14px;width:27.6px;top:127.5px">50</div>
<div class="ax r" style="left:14px;width:27.6px;top:154.3px">40</div>
<div class="ax r" style="left:14px;width:27.6px;top:181.1px">30</div>
<div class="ax r" style="left:14px;width:27.6px;top:207.9px">20</div>
<div class="ax r" style="left:14px;width:27.6px;top:234.7px">10</div>
<div class="ax" style="left:469.8px;top:127.5px">16</div>
<div class="ax" style="left:469.8px;top:144.2px">14</div>
<div class="ax" style="left:469.8px;top:160.8px">12</div>
<div class="ax" style="left:469.8px;top:177.4px">10</div>
<div class="ax" style="left:469.8px;top:194.1px">8</div>
<div class="ax" style="left:469.8px;top:210.8px">6</div>
<div class="ax" style="left:469.8px;top:227.4px">4</div>
<div class="ax" style="left:469.8px;top:244.0px">2</div>
<div class="ax r" style="left:14px;width:27.6px;top:289.5px">20</div>
<div class="ax" style="left:469.8px;top:289.5px">20</div>
<div class="ax r" style="left:14px;width:27.6px;top:316.3px">16</div>
<div class="ax" style="left:469.8px;top:316.3px">16</div>
<div class="ax r" style="left:14px;width:27.6px;top:343.1px">12</div>
<div class="ax" style="left:469.8px;top:343.1px">12</div>
<div class="ax r" style="left:14px;width:27.6px;top:369.9px">8</div>
<div class="ax" style="left:469.8px;top:369.9px">8</div>
<div class="ax r" style="left:14px;width:27.6px;top:396.7px">4</div>
<div class="ax" style="left:469.8px;top:396.7px">4</div>
<div class="ax c" style="left:38.2px;width:24px;text-align:center;top:272px">0.0</div>
<div class="ax c" style="left:38.2px;width:24px;text-align:center;top:434px">0.0</div>
<div class="ax c" style="left:84.6px;width:24px;text-align:center;top:272px">0.5</div>
<div class="ax c" style="left:84.6px;width:24px;text-align:center;top:434px">0.5</div>
<div class="ax c" style="left:131.0px;width:24px;text-align:center;top:272px">1.0</div>
<div class="ax c" style="left:131.0px;width:24px;text-align:center;top:434px">1.0</div>
<div class="ax c" style="left:177.5px;width:24px;text-align:center;top:272px">1.5</div>
<div class="ax c" style="left:177.5px;width:24px;text-align:center;top:434px">1.5</div>
<div class="ax c" style="left:223.9px;width:24px;text-align:center;top:272px">2.0</div>
<div class="ax c" style="left:223.9px;width:24px;text-align:center;top:434px">2.0</div>
<div class="ax c" style="left:270.3px;width:24px;text-align:center;top:272px">2.5</div>
<div class="ax c" style="left:270.3px;width:24px;text-align:center;top:434px">2.5</div>
<div class="ax c" style="left:316.8px;width:24px;text-align:center;top:272px">3.0</div>
<div class="ax c" style="left:316.8px;width:24px;text-align:center;top:434px">3.0</div>
<div class="ax c" style="left:363.2px;width:24px;text-align:center;top:272px">3.5</div>
<div class="ax c" style="left:363.2px;width:24px;text-align:center;top:434px">3.5</div>
<div class="ax c" style="left:409.6px;width:24px;text-align:center;top:272px">4.0</div>
<div class="ax c" style="left:409.6px;width:24px;text-align:center;top:434px">4.0</div>
<div class="ax c" style="left:456.0px;width:24px;text-align:center;top:272px">4.5</div>
<div class="ax c" style="left:456.0px;width:24px;text-align:center;top:434px">4.5</div>
<!-- legend boxes -->
<div class="gb" style="left:14px;top:463px;width:146px;height:56px;border-radius:0"></div>
<div class="gl" style="left:22px;top:456px"><span style="display:inline-block;width:9px;height:9px;background:#00e8e8;border:1px solid #000;vertical-align:-1px;margin-right:4px"></span>PI Errors</div>
<div class="t" style="left:22px;top:473px">Durchschnitt</div><div class="t" style="left:22px;top:488px">Maximum:</div><div class="t" style="left:22px;top:503px">Gesamt:</div>
<div class="v r" style="left:90px;width:60px;top:473px">3.81</div><div class="v r" style="left:90px;width:60px;top:488px">37</div><div class="v r" style="left:90px;width:60px;top:503px">67824</div>
<div class="gb" style="left:173px;top:463px;width:145px;height:56px;border-radius:0"></div>
<div class="gl" style="left:180px;top:456px"><span style="display:inline-block;width:9px;height:9px;background:#f0f000;border:1px solid #000;vertical-align:-1px;margin-right:4px"></span>PI Failures</div>
<div class="t" style="left:181px;top:473px">Durchschnitt</div><div class="t" style="left:181px;top:488px">Maximum:</div><div class="t" style="left:181px;top:503px">Gesamt:</div>
<div class="v r" style="left:249px;width:60px;top:473px">0.09</div><div class="v r" style="left:249px;width:60px;top:488px">16</div><div class="v r" style="left:249px;width:60px;top:503px">12951</div>
<div class="gb" style="left:332px;top:463px;width:147px;height:41px;border-radius:0"></div>
<div class="gl" style="left:338px;top:456px"><span style="display:inline-block;width:9px;height:9px;background:#f000e0;border:1px solid #000;vertical-align:-1px;margin-right:4px"></span>Jitter</div>
<div class="t" style="left:340px;top:473px">Durchschnitt</div><div class="t" style="left:340px;top:488px">Maximum:</div><div class="t" style="left:340px;top:507px">PO Ausfälle:</div>
<div class="v r" style="left:408px;width:61px;top:473px">9.18 %</div><div class="v r" style="left:408px;width:61px;top:488px">12.4 %</div><div class="v r" style="left:408px;width:61px;top:507px">0</div>
<!-- right column -->
<div class="gb" style="left:491px;top:130px;width:140px;height:84px"></div>
<div class="gl" style="left:498px;top:123px">Disk-Info</div>
<div class="t" style="left:500px;top:139px">Typ:</div><div class="t" style="left:500px;top:156px">ID:</div><div class="t" style="left:500px;top:174px">Datum:</div><div class="t" style="left:500px;top:192px">Label:</div>
<div class="v" style="left:545px;top:139px">DVD+R</div><div class="v" style="left:545px;top:156px">YUDEN000 T03</div><div class="v" style="left:545px;top:174px">29 Dec 2006</div>
<div class="abs" style="left:540px;top:190px;width:90px;height:14px;background:#000"></div>
<div class="gb" style="left:491px;top:221px;width:140px;height:204px"></div>
<div class="gl" style="left:498px;top:214px">Einstellungen</div>
<div class="abs" style="left:500px;top:230px;width:84px;height:21px;border:1px solid #9a9a9a;border-radius:4px;background:#fff"></div>
<div class="t" style="left:505px;top:234px">8 X</div>
<div class="abs" style="left:569px;top:232px;width:1px;height:17px;background:#a0a0a0"></div>
<div class="abs" style="left:573px;top:238px;width:0;height:0;border:3.5px solid transparent;border-top:5px solid #6c6c6c"></div>
<div class="abs" style="left:593px;top:230px;width:22px;height:22px;background:#ececec;border:1px solid #fdfdfd;border-right:2px solid #8c8c8c;border-bottom:2px solid #8c8c8c"></div>
<svg class="abs" style="left:594px;top:230px" width="20" height="20" viewBox="594 230 20 20"><rect x="596.4" y="232.5" width="13.2" height="15" fill="#fff" stroke="#000" stroke-width="1"/><path d="M599.6 240v-3.4h4" fill="none" stroke="#0a8a0a" stroke-width="1.3"/><path d="M603.2 234.2l2.6 2.4-2.6 2.4z" fill="#0a8a0a"/><path d="M606.8 240v3.400h-4" fill="none" stroke="#0a8a0a" stroke-width="1.3"/><path d="M603.2 241l-2.6 2.400 2.600 2.400z" fill="#0a8a0a"/></svg>
<div class="t" style="left:502px;top:262px">Start:</div><div class="t" style="left:502px;top:285px">Ende:</div>
<div class="fld" style="left:554px;top:256px;width:60px;height:20px"><span>0000 MB</span></div>
<div class="fld" style="left:554px;top:279px;width:60px;height:20px"><span>4456 MB</span></div>
<div class="cb" style="top:302px"></div><div class="t" style="left:518px;top:302px">Schnelles Scannen</div>
<div class="cb on" style="top:320px"></div><div class="t" style="left:518px;top:320px">C1/PIE anzeigen</div>
<div class="cb on" style="top:335px"></div><div class="t" style="left:518px;top:335px">C2/PIF anzeigen</div>
<div class="cb on" style="top:351px"></div><div class="t" style="left:518px;top:351px">Jitter anzeigen</div>
<div class="cb on" style="top:367px"></div><div class="t" style="left:518px;top:367px">Zeige Lesegeschw.</div>
<div class="cb on dis" style="top:382px"></div><div class="t" style="left:518px;top:382px;color:#a8a8a8">Zeige Schreibgeschw.</div>
<div class="btn" style="left:551px;top:398px;width:73px;height:21px;padding-top:3px;text-indent:0;font:12px 'Liberation Sans',sans-serif"><span style="display:inline-block;transform:scaleX(0.89)">Erweitert</span></div>
<div class="gb" style="left:491px;top:430px;width:140px;height:27px"></div>
<div class="t" style="left:502px;top:438px">Qualitätsindex:</div><div class="v r" style="left:561px;width:60px;top:438px">90</div>
<div class="gb" style="left:491px;top:463px;width:140px;height:56px"></div>
<div class="t" style="left:502px;top:472px">Fortschritt:</div><div class="t" style="left:502px;top:488px">Position:</div><div class="t" style="left:502px;top:504px">Geschwindigkeit:</div>
<div class="v r" style="left:561px;width:61px;top:472px">100 %</div><div class="v r" style="left:561px;width:61px;top:488px">4455 MB</div><div class="v r" style="left:561px;width:61px;top:504px">8.23 X</div>
</body></html>
